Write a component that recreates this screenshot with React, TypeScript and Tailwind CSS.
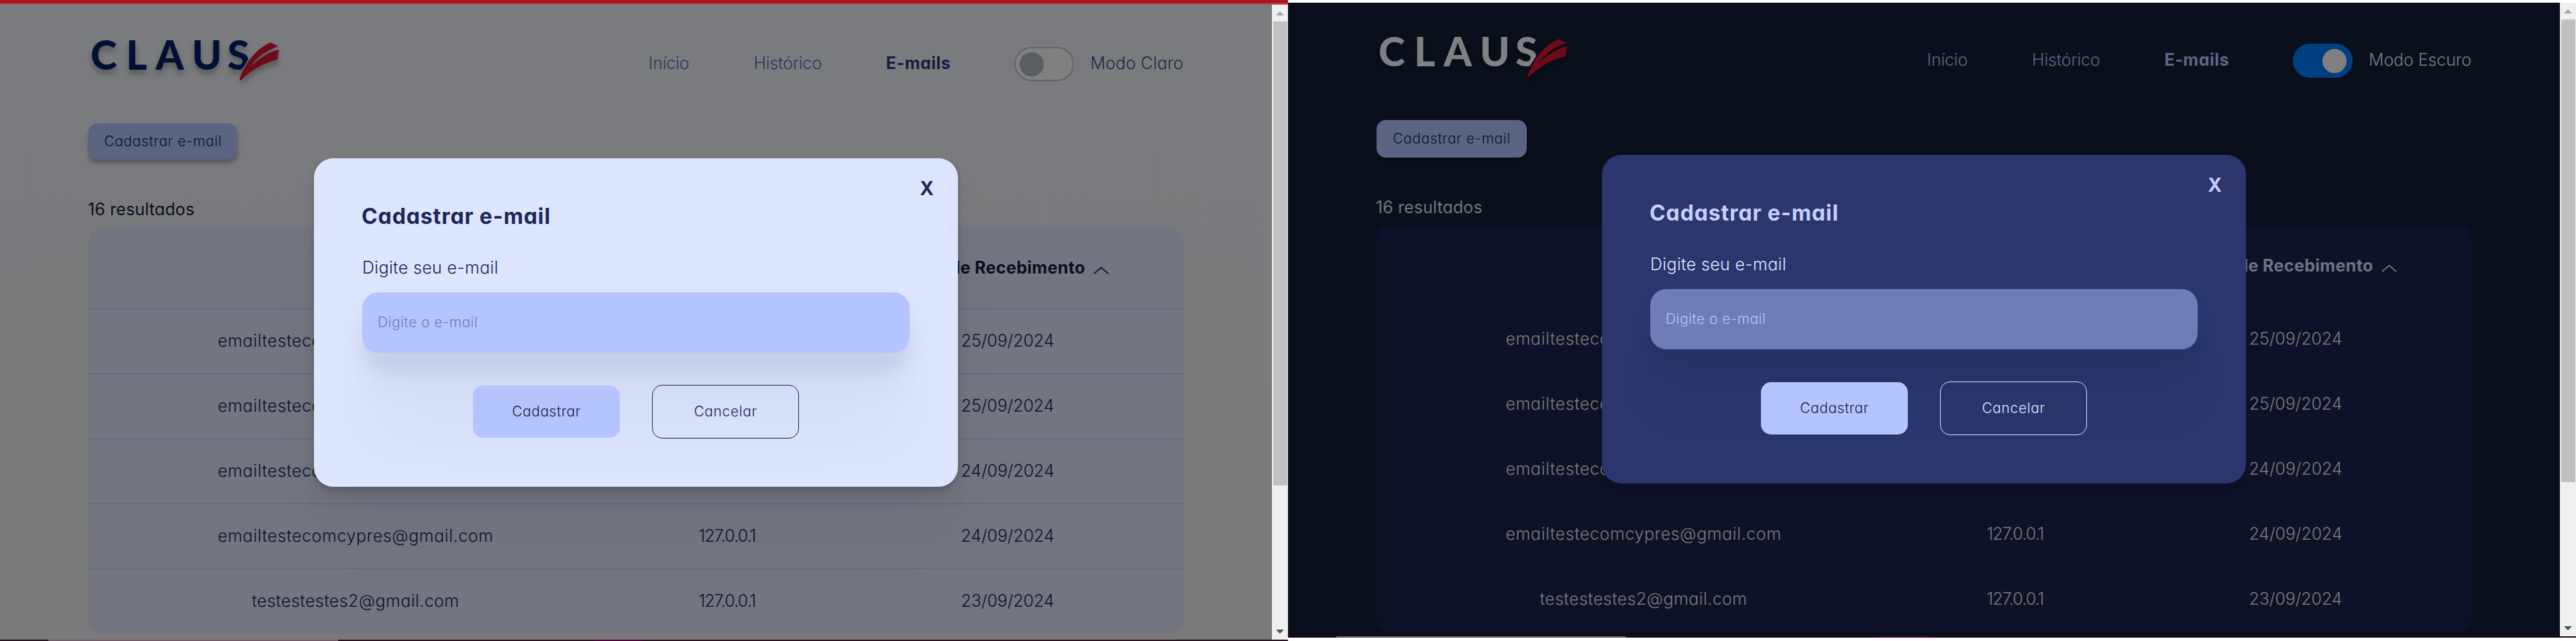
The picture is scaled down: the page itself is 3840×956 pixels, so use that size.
type Theme = {
  page: string;
  padTop: string;
  logo: string;
  logoShadow: string;
  nav: string;
  active: string;
  track: string;
  knob: string;
  mode: string;
  modeText: string;
  button: string;
  results: string;
  table: string;
  line: string;
  head: string;
  cell: string;
  chevron: string;
  modal: string;
  modalTop: string;
  title: string;
  label: string;
  input: string;
  submit: string;
  cancel: string;
  strip: string;
  stripLight: string;
  scroll: string;
  thumb: string;
};

const light: Theme = {
  page: "h-[947px] bg-linear-to-b from-[#7a7b7e] to-[#7a7a7c]",
  padTop: "pt-[43px]",
  logo: "#000f33",
  logoShadow: "[filter:drop-shadow(0_6px_4px_rgba(0,0,0,0.3))]",
  nav: "text-[#30375a]",
  active: "text-[#151c42]",
  track: "justify-start border-2 border-[#62656a] bg-[#7f807f] pl-[6px]",
  knob: "bg-[#595e63]",
  mode: "Modo Claro",
  modeText: "text-[#232845] tracking-[0.2px]",
  button: "h-[54px] w-[222px] bg-[#5b6482] text-[#0f1327] shadow-[0_5px_6px_rgba(0,0,0,0.3)]",
  results: "text-[#0a0e1c]",
  table: "bg-[#73757f]",
  line: "border-[#5a6385]",
  head: "text-[#0a0f20]",
  cell: "text-[#0f1328]",
  chevron: "#14193a",
  modal:
    "bg-[#dde5ff] shadow-[0_5px_8px_rgba(0,0,0,0.15),0_20px_30px_rgba(0,0,0,0.06),0_80px_80px_rgba(0,0,0,0.03)]",
  modalTop: "top-[229px]",
  title: "text-[#1c2757]",
  label: "text-[#1c2757]",
  input:
    "bg-[#b4c4ff] text-[#6f7dbb] shadow-[0_125px_100px_rgba(0,0,0,0.04),0_52px_42px_rgba(0,0,0,0.04),0_28px_24px_rgba(0,0,0,0.025),0_14px_40px_rgba(0,0,0,0.05)]",
  submit: "bg-[#b4c4ff] text-[#1a2348]",
  cancel: "border-[#1c2757] text-[#1c2757]",
  strip: "bg-[#28101f]",
  stripLight: "bg-[#755c6b]",
  scroll: "h-[947px]",
  thumb: "h-[692px]",
};

const dark: Theme = {
  page: "h-[945px] bg-[#0a101b]",
  padTop: "pt-[41px]",
  logo: "#7e8084",
  logoShadow: "[filter:drop-shadow(0_6px_4px_rgba(0,0,0,0.3))]",
  nav: "text-[#5a6385]",
  active: "text-[#5d6688]",
  track: "justify-end bg-[#003f80] pr-[9px]",
  knob: "bg-[#808080]",
  mode: "Modo Escuro",
  modeText: "text-[#787b86] tracking-[-0.1px]",
  button: "h-[56px] w-[224px] bg-[#5b6482] text-[#0f1327] shadow-[0_5px_6px_rgba(0,0,0,0.3)]",
  results: "text-[#70747f]",
  table: "bg-[#0e1228]",
  line: "border-[#151a32]",
  head: "text-[#6f7380]",
  cell: "text-[#7a7a7a]",
  chevron: "#6f7380",
  modal: "bg-[#2a366d] shadow-[0_5px_8px_rgba(0,0,0,0.15)]",
  modalTop: "top-[227px]",
  title: "text-[#c5d0ff]",
  label: "text-[#dde5ff]",
  input:
    "bg-[#6e7cb7] text-[#b4c4ff] shadow-[0_90px_80px_rgba(0,0,0,0.03),0_30px_36px_rgba(0,0,0,0.07)]",
  submit: "bg-[#b4c4ff] text-[#1a2348]",
  cancel: "border-[#dde5ff] text-[#dde5ff]",
  strip: "bg-[#24051a]",
  stripLight: "bg-[#705f6b]",
  scroll: "h-[945px]",
  thumb: "h-[690px]",
};

const rows = [
  ["emailtestecomcypres@gmail.com", "127.0.0.1", "25/09/2024"],
  ["emailtestecomcypres@gmail.com", "127.0.0.1", "25/09/2024"],
  ["emailtestecomcypres@gmail.com", "127.0.0.1", "24/09/2024"],
  ["emailtestecomcypres@gmail.com", "127.0.0.1", "24/09/2024"],
  ["testestestes2@gmail.com", "127.0.0.1", "23/09/2024"],
];

function Logo({ t, id }: { t: Theme; id: string }) {
  return (
    <svg
      viewBox="130 50 290 80"
      className={`h-[80px] w-[290px] -ml-[2px] overflow-visible ${t.logoShadow}`}
    >
      <clipPath id={id}>
        <path d="M130 50H395L360 104L354 113H130Z" />
      </clipPath>
      <g clipPath={`url(#${id})`}>
        <text
          x="135 188 232 286 339"
          y="103.7"
          fontFamily="Lato"
          fontWeight="900"
          fontSize="60"
          fill={t.logo}
        >
          CLAUS
        </text>
      </g>
      <path
        d="M403.3 63.3L414.7 69.3C396 75.5 383 86 373 99C388 86 400 78 416 73.7L413.5 89C393 94 375 104 358.8 120L357 118.5C365 95 381 73 403.3 63.3Z"
        fill="#6f0a18"
      />
    </svg>
  );
}

function Header({ t, id }: { t: Theme; id: string }) {
  return (
    <header className="flex h-[80px] items-center justify-between">
      <Logo t={t} id={id} />
      <div className="mt-[11px] flex items-center">
        <nav className={`flex gap-[96px] pb-[3px] leading-10 font-light ${t.nav}`}>
          <a className="tracking-[-0.2px]">Início</a>
          <a className="tracking-[-0.2px]">Histórico</a>
          <a className={`font-bold tracking-[0.5px] ${t.active}`}>E-mails</a>
        </nav>
        <span className={`ml-[95px] flex h-[51px] w-[89px] items-center rounded-full ${t.track}`}>
          <span className={`size-[36px] rounded-full ${t.knob}`} />
        </span>
        <span className={`ml-[24px] pb-[3px] leading-10 font-light ${t.modeText}`}>{t.mode}</span>
      </div>
    </header>
  );
}

function Table({ t }: { t: Theme }) {
  return (
    <section className={`mt-2 h-[605px] overflow-hidden rounded-[20px] ${t.table}`}>
      <div
        className={`grid h-[121px] grid-cols-[796px_312px_524px] items-center border-b text-center font-bold ${t.line} ${t.head}`}
      >
        <span className="col-start-3 flex items-center justify-center gap-[12px] pr-[2px] tracking-[0.35px]">
          Data de Recebimento
          <svg width="23" height="12" viewBox="0 0 23 12" className="mt-[5px]">
            <path d="M1 11L11.5 2L22 11" fill="none" stroke={t.chevron} strokeWidth="2" />
          </svg>
        </span>
      </div>
      {rows.map((r, i) => (
        <div
          key={i}
          className={`grid h-[97px] grid-cols-[796px_312px_524px] items-center border-b text-center font-light last:border-b-0 last:pb-[1px] ${t.line} ${t.cell}`}
        >
          <span className={i === 4 ? "tracking-[0.42px]" : "tracking-[0.58px]"}>{r[0]}</span>
          <span className="tracking-[-0.9px]">{r[1]}</span>
          <span className="tracking-[-0.1px]">{r[2]}</span>
        </div>
      ))}
    </section>
  );
}

function Modal({ t }: { t: Theme }) {
  return (
    <div
      className={`absolute left-[468px] flex h-[490px] w-[960px] flex-col rounded-[29px] px-[72px] pt-[63px] ${t.modalTop} ${t.modal}`}
    >
      <button
        className={`absolute top-[25px] right-[36px] h-10 text-[28px] leading-10 font-bold ${t.title}`}
      >
        X
      </button>
      <h2 className={`-ml-[1px] h-12 text-[32px] leading-[48px] font-bold tracking-[0.9px] ${t.title}`}>
        Cadastrar e-mail
      </h2>
      <label className={`mt-8 h-10 leading-10 font-light tracking-[0.35px] ${t.label}`}>
        Digite seu e-mail
      </label>
      <div
        className={`mt-[17px] flex h-[90px] items-center rounded-[24px] pl-[23px] text-[21px] font-light tracking-[0.45px] ${t.input}`}
      >
        Digite o e-mail
      </div>
      <div className="relative mt-12 flex items-center justify-center gap-12 text-[21px]">
        <button className={`h-[78px] w-[219px] rounded-[15px] font-light tracking-[0.55px] ${t.submit}`}>
          Cadastrar
        </button>
        <button className={`h-[80px] w-[219px] rounded-[15px] border-[1.5px] font-light tracking-[0.6px] ${t.cancel}`}>
          Cancelar
        </button>
      </div>
    </div>
  );
}

function Scrollbar({ t }: { t: Theme }) {
  return (
    <div className={`flex w-6 flex-col items-center bg-[#f0f0f0] ${t.scroll}`}>
      <svg width="12" height="6" viewBox="0 0 12 6" className="mt-[10px]">
        <path d="M0 6L6 0L12 6Z" fill="#a3a3a3" />
      </svg>
      <div className={`mt-[9px] w-[21px] bg-[#c1c1c1] ${t.thumb}`} />
      <svg width="12" height="6" viewBox="0 0 12 6" className="mt-auto mb-[9px]">
        <path d="M0 0L6 6L12 0Z" fill="#505050" />
      </svg>
    </div>
  );
}

function Screen({ t, id }: { t: Theme; id: string }) {
  return (
    <div className="w-[1920px]">
      <div className="flex">
        <main className={`relative w-[1896px] overflow-hidden px-[132px] ${t.page} ${t.padTop}`}>
          <Header t={t} id={id} />
          <button
            className={`mt-[54px] block rounded-[14px] text-[21px] font-light tracking-[0.6px] ${t.button}`}
          >
            Cadastrar e-mail
          </button>
          <p className={`mt-[54px] h-10 -ml-[1px] leading-10 tracking-[0.1px] ${t.results}`}>16 resultados</p>
          <Table t={t} />
          <Modal t={t} />
        </main>
        <Scrollbar t={t} />
      </div>
      <div className={`flex h-[2px] ${t.strip}`}>
        <span className={`ml-[72px] h-full w-[432px] ${t.stripLight}`} />
        <span className="ml-[380px] h-full w-[73px] bg-[#50003a]" />
      </div>
    </div>
  );
}

export default function App() {
  return (
    <div className="flex h-[956px] w-[3840px] overflow-hidden bg-white font-[Inter,sans-serif] text-[25px] [font-feature-settings:'cv11']">
      <div>
        <div className="h-[7px] border-b-2 border-[#bd5053] bg-[#a61a1d]" />
        <Screen t={light} id="logo-light" />
      </div>
      <div className="pt-1">
        <Screen t={dark} id="logo-dark" />
      </div>
    </div>
  );
}
